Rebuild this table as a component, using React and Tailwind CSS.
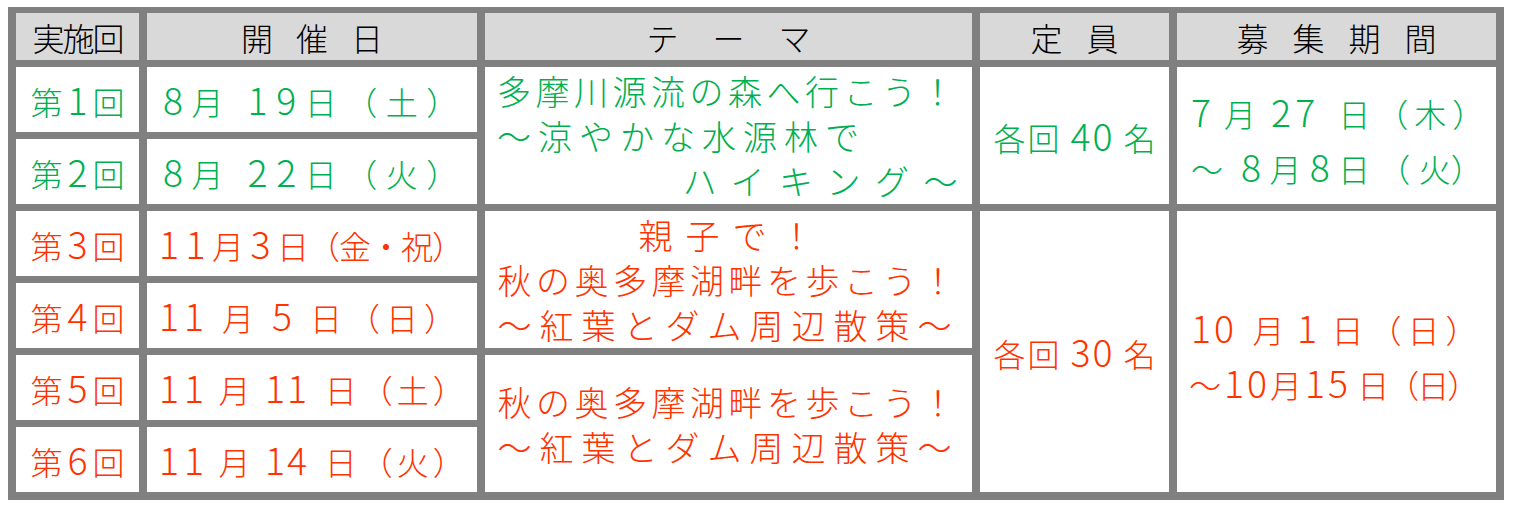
import React from "react";

const GREEN = "text-[#00b050]";
const RED = "text-[#ff3300]";

// digits in the original font are as tall as the kanji, so they get a bigger size
function Txt({ t }) {
  return t.split(/(\d+)/).map((p, i) =>
    /^\d+$/.test(p) ? (
      <span key={i} className="text-[1.17em]">
        {p}
      </span>
    ) : (
      p
    )
  );
}

function Line({ segs, className = "" }) {
  return (
    <div className={`whitespace-pre ${className}`}>
      {segs.map(([t, c], i) => (
        <span key={i} className={c}>
          <Txt t={t} />
        </span>
      ))}
    </div>
  );
}

function Head({ children, className = "" }) {
  return (
    <div className="bg-[#d9d9d9] flex items-center justify-center text-black">
      <span className={className}>{children}</span>
    </div>
  );
}

const rounds = [
  { no: "第1回", color: GREEN, pl: "pl-[16px]", segs: [["8月 19日（土）", "tracking-[8.5px]"]] },
  { no: "第2回", color: GREEN, pl: "pl-[16px]", segs: [["8月 22日（火）", "tracking-[8.5px]"]] },
  {
    no: "第3回",
    color: RED,
    pl: "pl-[12px]",
    segs: [
      ["11月3", "tracking-[6.5px]"],
      ["日（金・祝）", "tracking-[-1px]"],
    ],
  },
  {
    no: "第4回",
    color: RED,
    pl: "pl-[12px]",
    segs: [
      ["1", "tracking-[5px]"],
      ["1月5", "tracking-[18px]"],
      ["日（日）", "tracking-[6px]"],
    ],
  },
  {
    no: "第5回",
    color: RED,
    pl: "pl-[12px]",
    segs: [
      ["1", "tracking-[5px]"],
      ["1月", "tracking-[14.5px]"],
      ["1", "tracking-[2px]"],
      ["1", "tracking-[17.5px]"],
      ["日（土）", "tracking-[4px]"],
    ],
  },
  {
    no: "第6回",
    color: RED,
    pl: "pl-[12px]",
    segs: [
      ["1", "tracking-[5px]"],
      ["1月", "tracking-[14.5px]"],
      ["1", "tracking-[2px]"],
      ["4", "tracking-[17.5px]"],
      ["日（火）", "tracking-[4px]"],
    ],
  },
];

function NoCell({ r }) {
  return (
    <div className={`bg-white flex items-center justify-center ${r.color}`}>
      <span className="tracking-[5px] pl-[5px]">
        <Txt t={r.no} />
      </span>
    </div>
  );
}

function DateCell({ r }) {
  return (
    <div className={`bg-white flex items-center ${r.pl} ${r.color}`}>
      <Line segs={r.segs} />
    </div>
  );
}

function AkiTheme() {
  return (
    <>
      <Line className="text-center" segs={[["秋の奥多摩湖畔を歩こう！", "tracking-[4.5px]"]]} />
      <Line className="text-center" segs={[["～紅葉とダム周辺散策～", "tracking-[8px]"]]} />
    </>
  );
}

export default function App() {
  const [r1, r2, r3, r4, r5, r6] = rounds;
  return (
    <div className="min-h-screen bg-white pt-[7px] pl-[8px] font-['Noto_Sans_CJK_JP','Noto_Sans',sans-serif] font-light">
      <div className="inline-grid grid-cols-[123px_330px_487px_189px_319px] grid-rows-[47px_repeat(6,65px)] gap-x-[8px] gap-y-[7px] bg-[#808080] px-[8px] pt-[6px] pb-[8px] text-[32px] leading-none">
        <Head className="tracking-[-2px]">実施回</Head>
        <Head className="tracking-[23px] pl-[23px]">開催日</Head>
        <Head className="tracking-[34px] pl-[34px]">テーマ</Head>
        <Head className="tracking-[24px] pl-[24px]">定員</Head>
        <Head className="tracking-[24px] pl-[24px]">募集期間</Head>

        <NoCell r={r1} />
        <DateCell r={r1} />
        <div className={`bg-white row-span-2 flex flex-col justify-center text-[34px] leading-[45px] ${GREEN}`}>
          <Line className="pl-[12px]" segs={[["多摩川源流の森へ行こう！", "tracking-[4.5px]"]]} />
          <Line className="pl-[12px]" segs={[["～涼やかな水源林で", "tracking-[7px]"]]} />
          <Line className="text-right" segs={[["ハイキング～", "tracking-[14.5px]"]]} />
        </div>
        <div className={`bg-white row-span-2 flex items-center justify-center ${GREEN}`}>
          <Line className="tracking-[2px] pl-[2px]" segs={[["各回 40 名", ""]]} />
        </div>
        <div className={`bg-white row-span-2 flex flex-col justify-center pt-[8px] leading-[53px] ${GREEN}`}>
          <Line
            className="pl-[14px]"
            segs={[
              ["7", "tracking-[13px]"],
              ["月 2", "tracking-[4px]"],
              ["7 ", "tracking-[8px]"],
              ["日（木）", "tracking-[6px]"],
            ]}
          />
          <Line
            className="pl-[14px]"
            segs={[
              ["～ ", "tracking-[5.5px]"],
              ["8月8日（", "tracking-[8.3px]"],
              ["火）", "tracking-[0px]"],
            ]}
          />
        </div>

        <NoCell r={r2} />
        <DateCell r={r2} />

        <NoCell r={r3} />
        <DateCell r={r3} />
        <div className={`bg-white row-span-2 flex flex-col justify-center text-[34px] leading-[45px] ${RED}`}>
          <Line className="text-center pl-[8px]" segs={[["親子で！", "tracking-[13px]"]]} />
          <AkiTheme />
        </div>
        <div className={`bg-white row-span-4 flex items-center justify-center ${RED}`}>
          <Line className="tracking-[2px] pl-[2px]" segs={[["各回 30 名", ""]]} />
        </div>
        <div className={`bg-white row-span-4 flex flex-col justify-center pt-[8px] leading-[53px] ${RED}`}>
          <Line
            className="pl-[14px]"
            segs={[
              ["1", "tracking-[3px]"],
              ["0", "tracking-[18.5px]"],
              ["月", "tracking-[12.5px]"],
              ["1", "tracking-[14.5px]"],
              ["日（日）", "tracking-[6px]"],
            ]}
          />
          <Line
            className="pl-[12px]"
            segs={[
              ["～10月1", "tracking-[3px]"],
              ["5", "tracking-[9px]"],
              ["日（日）", "tracking-[-2px]"],
            ]}
          />
        </div>

        <NoCell r={r4} />
        <DateCell r={r4} />

        <NoCell r={r5} />
        <DateCell r={r5} />
        <div className={`bg-white row-span-2 flex flex-col justify-center text-[34px] leading-[45px] ${RED}`}>
          <AkiTheme />
        </div>

        <NoCell r={r6} />
        <DateCell r={r6} />
      </div>
    </div>
  );
}
